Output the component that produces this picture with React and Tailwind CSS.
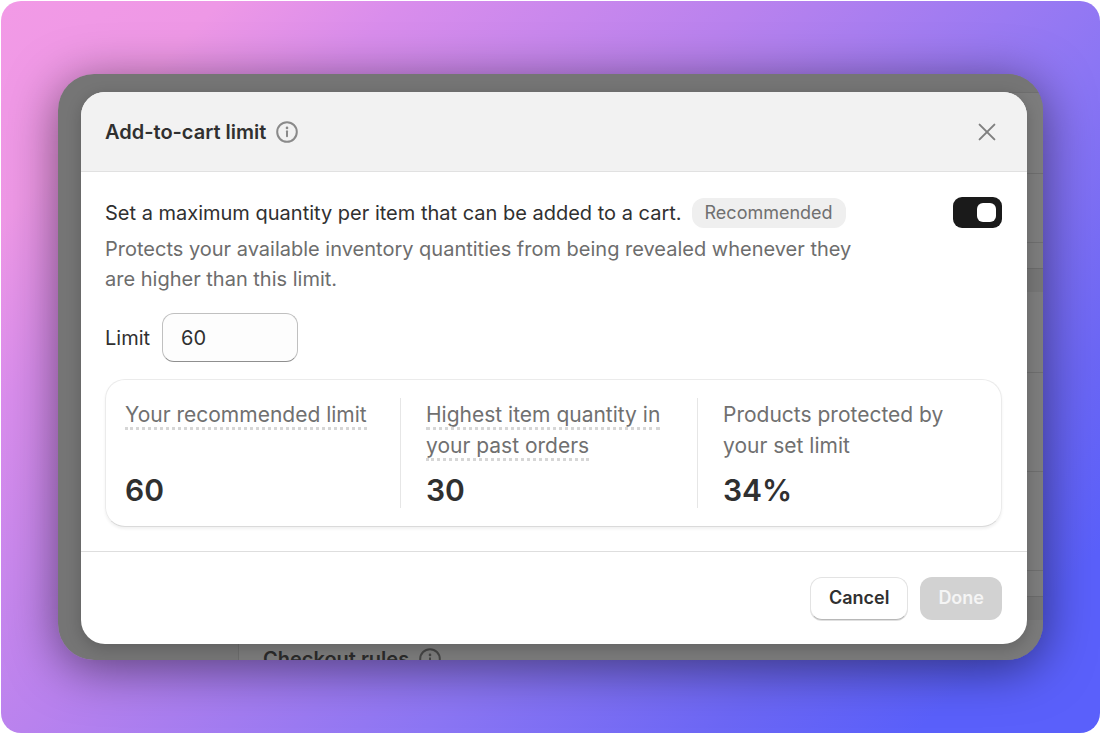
import { useState } from "react";

function InfoIcon({ className }) {
  return (
    <svg viewBox="0 0 22 22" fill="none" stroke="currentColor" strokeWidth="2" strokeLinecap="round" className={className} aria-hidden="true">
      <circle cx="11" cy="11" r="9.8" />
      <path d="M11 10.2v5" />
      <circle cx="11" cy="6.9" r="1.3" fill="currentColor" stroke="none" />
    </svg>
  );
}

function PageBehind() {
  return (
    <div className="absolute inset-0 flex overflow-hidden bg-[#757575]" aria-hidden="true">
      <div className="w-[180px] shrink-0" />
      <div className="flex grow flex-col gap-[23px]">
        <section className="border-b border-[#6b6b6b] bg-[#7c7c7c]">
          <div className="h-[19px] border-b border-[#6e6e6e] bg-[#757575]" />
          <div className="h-[81px] border-b border-[#6e6e6e]" />
          <div className="h-[69px] border-b border-[#6e6e6e]" />
          <div className="h-[25px]" />
        </section>
        <section className="border-l border-b border-[#6b6b6b] bg-[#7c7c7c]">
          <div className="h-[81px] border-b border-[#6e6e6e]" />
          <div className="h-[99px] border-b border-[#6e6e6e]" />
          <div className="h-[99px] border-b border-[#6e6e6e]" />
          <div className="h-[25px]" />
        </section>
        <section className="h-24 border-l border-[#6b6b6b] bg-[#7a7a7a] px-6 pt-[25px]">
          <h2 className="flex items-center gap-[10px] text-xl font-semibold text-[#2a2a2a]">
            Checkout rules
            <InfoIcon className="size-[22px] text-[#444444]" />
          </h2>
        </section>
      </div>
    </div>
  );
}

function Stat({ label, value, hinted }) {
  return (
    <div className="flex flex-col justify-between">
      <dt className="pt-px text-[21px] leading-[31px] text-[#707070]">
        <span className={hinted ? "border-b-[3px] border-dotted border-[#d6d6d6]" : ""}>{label}</span>
      </dt>
      <dd className="text-[30px] leading-9 font-semibold text-[#303030]">{value}</dd>
    </div>
  );
}

export default function App() {
  const [limit, setLimit] = useState("60");
  const [enabled, setEnabled] = useState(true);
  return (
    <div className="min-h-screen bg-white pt-px pl-px font-[Inter,sans-serif]">
      <main className="rounded-[20px] bg-[linear-gradient(135deg,#f29ae6_0%,#ee98e6_12%,#d98dec_22%,#b982ee_41%,#8c76f4_63%,#6c67f5_79%,#5a60fb_90%)] px-[57px] py-[73px]">
        <div className="rounded-[36px] shadow-[0_8px_50px_rgba(0,0,0,0.5)]">
          <div className="relative overflow-hidden rounded-[36px] pt-[18px] pr-4 pb-4 pl-[23px]">
            <PageBehind />
            <div role="dialog" aria-labelledby="dialog-title" className="relative overflow-hidden rounded-3xl bg-white shadow-[0_4px_16px_rgba(0,0,0,0.2)]">
              <header className="flex h-20 items-center justify-between border-b border-[#e1e1e1] bg-[#f2f2f2] pr-[30px] pl-6">
                <h1 id="dialog-title" className="flex items-center gap-[10px] text-xl font-semibold text-[#303030]">
                  Add-to-cart limit
                  <InfoIcon className="size-[22px] text-[#8a8a8a]" />
                </h1>
                <button type="button" aria-label="Close" className="text-[#808080]">
                  <svg viewBox="0 0 20 20" className="size-5" fill="none" stroke="currentColor" strokeWidth="2" strokeLinecap="round" aria-hidden="true">
                    <path d="M2.6 2.6 17.4 17.4M17.4 2.6 2.6 17.4" />
                  </svg>
                </button>
              </header>

              <div className="pt-[25px] pr-[25px] pb-6 pl-6">
                <div className="flex items-center justify-between">
                  <div className="flex items-center gap-[10px]">
                    <p className="text-xl leading-[30px] text-[#303030]">Set a maximum quantity per item that can be added to a cart.</p>
                    <span className="rounded-xl bg-[#efefef] px-[13px] text-lg leading-[30px] text-[#707070]">Recommended</span>
                  </div>
                  <button
                    type="button"
                    role="switch"
                    aria-checked={enabled}
                    aria-label="Enable add-to-cart limit"
                    onClick={() => setEnabled(!enabled)}
                    className={`flex h-[31px] w-[49px] items-center rounded-[9px] bg-[#1a1a1a] px-1.5 ${enabled ? "justify-end" : "justify-start"}`}
                  >
                    <span className="size-[19px] rounded-md bg-white" />
                  </button>
                </div>
                <p className="mt-1.5 max-w-[760px] text-xl leading-[30px] text-[#6d6d6d]">
                  Protects your available inventory quantities from being revealed whenever they are higher than this limit.
                </p>
                <div className="mt-[19px] flex items-center gap-3 text-xl text-[#303030]">
                  <label htmlFor="limit">Limit</label>
                  <input
                    id="limit"
                    inputMode="numeric"
                    value={limit}
                    onChange={(e) => setLimit(e.target.value)}
                    className="h-[49px] w-[136px] rounded-xl border border-[#c0c0c0] border-b-[#8f8f8f] bg-[#fdfdfd] px-[18px] outline-none"
                  />
                </div>
                <dl className="mt-[17px] grid grid-cols-[295px_297px_1fr] rounded-[20px] border border-[#ebebeb] border-b-[#dadada] py-[18px] shadow-[0_2px_3px_rgba(0,0,0,0.06)]">
                  <div className="grid h-[110px] border-r border-[#e6e6e6] pl-[19px]">
                    <Stat label="Your recommended limit" value="60" hinted />
                  </div>
                  <div className="grid border-r border-[#e6e6e6] pr-6 pl-[25px]">
                    <Stat label="Highest item quantity in your past orders" value="30" hinted />
                  </div>
                  <div className="grid pr-10 pl-[25px]">
                    <Stat label="Products protected by your set limit" value="34%" />
                  </div>
                </dl>
              </div>

              <footer className="flex h-[93px] items-center justify-end gap-3 border-t border-[#dedede] pr-[25px] pl-6 text-lg font-semibold">
                <button type="button" className="h-[43px] rounded-xl border border-[#e3e3e3] border-b-[#b8b8b8] bg-white px-[18px] text-[#303030] shadow-[0_1px_0_#e0e0e0]">
                  Cancel
                </button>
                <button type="button" disabled className="h-[43px] rounded-xl bg-[#d2d2d2] px-[18px] text-[#f5f5f5]">
                  Done
                </button>
              </footer>
            </div>
          </div>
        </div>
      </main>
    </div>
  );
}
